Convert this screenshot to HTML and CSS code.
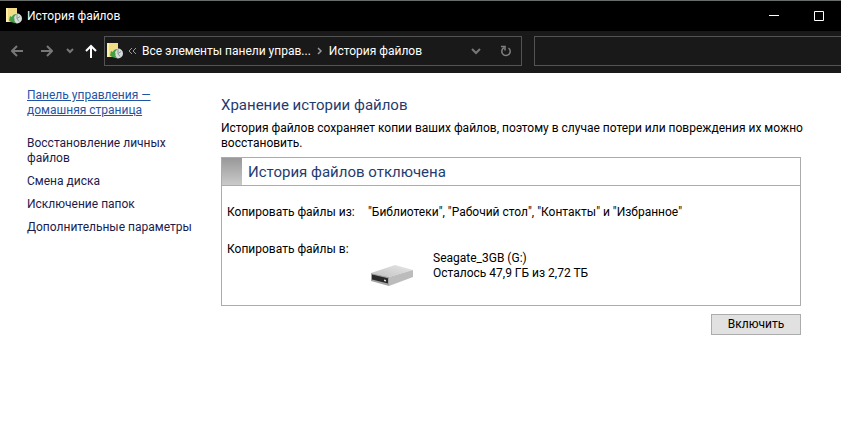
FILE: index.html
```
<!DOCTYPE html>
<html lang="ru">
<head>
    <meta charset="UTF-8">
    <meta name="viewport" content="width=device-width, initial-scale=1.0">
    <title>История файлов</title>
    <link rel="stylesheet" href="styles.css">
</head>
<body>
    <svg class="sprite" aria-hidden="true">
        <symbol id="history" viewBox="0 0 16 16">
            <path d="M0 0h11v14H0z" fill="#f3dc86"/>
            <path d="M0 0h2v14H0z" fill="#fff0a8"/>
            <circle cx="11" cy="10.500" r="5" fill="#d5dcda"/>
            <path d="M11 6.500v4l3-2M11 10.500l2 3M8 11h1" fill="none" stroke="#8d9894" stroke-width="1"/>
            <path d="M3 12.500 4 8l1.500 1C7 6.500 9 5.500 11.500 6 9 7 8 8.500 8 10.500s1 3 2 4.500c-3 0-6-1-7-2.500z" fill="#43a047"/>
        </symbol>
    </svg>

    <header class="titlebar">
        <svg class="app-icon"><use href="#history"/></svg>
        <span class="window-title">История файлов</span>
        <button class="window-button" type="button" aria-label="Свернуть">
            <svg width="10" height="10"><path d="M0 4.500h10" stroke="#fff"/></svg>
        </button>
        <button class="window-button" type="button" aria-label="Развернуть">
            <svg width="10" height="10"><path d="M.5.5h9v9h-9z" fill="none" stroke="#fff"/></svg>
        </button>
    </header>

    <nav class="toolbar">
        <button class="nav-button" type="button" aria-label="Назад">
            <svg width="12" height="12"><path d="M12 6H1M6 1 1 6l5 5" fill="none" stroke="#777" stroke-width="2"/></svg>
        </button>
        <button class="nav-button" type="button" aria-label="Вперед">
            <svg width="12" height="12"><path d="M0 6h11M6 1l5 5-5 5" fill="none" stroke="#777" stroke-width="2"/></svg>
        </button>
        <button class="nav-button recent" type="button" aria-label="Последние расположения">
            <svg width="8" height="8"><path d="M1 2l3 3 3-3" fill="none" stroke="#777" stroke-width="2"/></svg>
        </button>
        <button class="nav-button up" type="button" aria-label="Вверх">
            <svg width="12" height="14"><path d="M6 14V2M1 7l5-5 5 5" fill="none" stroke="#fff" stroke-width="2"/></svg>
        </button>
        <div class="address">
            <svg class="app-icon"><use href="#history"/></svg>
            <svg class="overflow" width="8" height="8"><path d="M4 1 1 4l3 3M8 1 5 4l3 3" fill="none" stroke="#999"/></svg>
            <a class="crumb" href="#">Все элементы панели управ...</a>
            <svg class="separator" width="6" height="8"><path d="M1 1l3 3-3 3" fill="none" stroke="#999" stroke-width="1.500"/></svg>
            <a class="crumb" href="#">История файлов</a>
            <button class="address-button drop" type="button" aria-label="Предыдущие расположения">
                <svg width="10" height="8"><path d="M1 2l4 4 4-4" fill="none" stroke="#777" stroke-width="2"/></svg>
            </button>
            <button class="address-button" type="button" aria-label="Обновить">
                <svg width="12" height="12"><path d="M8.500 3A4.200 4.200 0 1 1 4 2.700" fill="none" stroke="#808080" stroke-width="1.500"/><path d="M1 1.500h4V5.500" fill="none" stroke="#808080" stroke-width="1.500"/></svg>
            </button>
        </div>
        <input class="search" type="search" aria-label="Поиск">
    </nav>

    <div class="page">
        <aside class="sidebar">
            <a class="home" href="#">Панель управления — домашняя страница</a>
            <a href="#">Восстановление личных файлов</a>
            <a href="#">Смена диска</a>
            <a href="#">Исключение папок</a>
            <a href="#">Дополнительные параметры</a>
        </aside>

        <main class="content">
            <h1>Хранение истории файлов</h1>
            <p class="intro">История файлов сохраняет копии ваших файлов, поэтому в случае потери или повреждения их можно восстановить.</p>

            <section class="panel">
                <h2>История файлов отключена</h2>
                <dl class="details">
                    <dt>Копировать файлы из:</dt>
                    <dd>"Библиотеки", "Рабочий стол", "Контакты" и "Избранное"</dd>
                    <dt>Копировать файлы в:</dt>
                    <dd class="drive">
                        <svg class="drive-icon" width="48" height="28" viewBox="0 0 48 28">
                            <defs>
                                <linearGradient id="top" x1="0" y1="1" x2="1" y2="0">
                                    <stop offset="0" stop-color="#c2c2c2"/>
                                    <stop offset="1" stop-color="#e6e6e6"/>
                                </linearGradient>
                            </defs>
                            <path d="M3 12 27 4l18 5-24 7z" fill="url(#top)"/>
                            <path d="M21 16 45 9v7l-24 9z" fill="#bcbcbc"/>
                            <path d="M3 12l18 4v9L3 20z" fill="#a2a2a2"/>
                            <path d="M4 13.500l16 3.800v5.200L4 18.500z" fill="#292929"/>
                            <path d="M16 18.500l2 .5v1.500l-2-.5z" fill="#ddd"/>
                        </svg>
                        <div class="drive-info">
                            <div>Seagate_3GB (G:)</div>
                            <div>Осталось 47,9 ГБ из 2,72 ТБ</div>
                        </div>
                    </dd>
                </dl>
            </section>

            <button class="enable" type="button">Включить</button>
        </main>
    </div>
</body>
</html>
```
FILE: styles.css
```
* {
    box-sizing: border-box;
}

body {
    margin: 0;
    background: #fff;
    color: #000;
    font: 12px/15px Roboto, "Noto Sans", sans-serif;
}

button {
    margin: 0;
    padding: 0;
    border: 0;
    background: none;
    font: inherit;
}

svg {
    display: block;
    flex: none;
}

.sprite {
    display: none;
}

.app-icon {
    width: 16px;
    height: 16px;
}

.titlebar {
    display: flex;
    align-items: center;
    height: 31px;
    padding-left: 6px;
    border-top: 1px solid #686c6a;
    background: #000;
    color: #fff;
}

.window-title {
    flex: 1;
    margin-left: 5px;
}

.window-button {
    display: flex;
    align-items: center;
    justify-content: center;
    width: 45px;
    height: 30px;
}

.toolbar {
    display: flex;
    align-items: flex-start;
    height: 42px;
    padding: 5px 0 0 5px;
    background: #191919;
}

.nav-button {
    display: flex;
    flex: none;
    align-items: center;
    justify-content: center;
    width: 24px;
    height: 30px;
    margin-right: 6px;
}

.nav-button.recent {
    width: 10px;
    margin-right: 4px;
}

.nav-button.up {
    margin-right: 1px;
}

.address {
    display: flex;
    align-items: center;
    flex: 421 1 0;
    height: 30px;
    padding-left: 2px;
    border: 1px solid #535353;
    color: #fff;
}

.overflow {
    margin-left: 5px;
}

.crumb {
    margin-left: 6px;
    color: #fff;
    text-decoration: none;
    white-space: nowrap;
}

.separator {
    margin-left: 6px;
}

.address-button {
    display: flex;
    align-items: center;
    justify-content: center;
    width: 30px;
    height: 28px;
}

.address-button.drop {
    margin-left: auto;
}

.search {
    flex: 307 1 0;
    min-width: 0;
    height: 30px;
    margin-left: 12px;
    border: 1px solid #535353;
    border-right: 0;
    border-radius: 0;
    background: #191919;
    color: #fff;
    font: inherit;
}

.page {
    display: flex;
}

.sidebar {
    display: flex;
    flex: none;
    flex-direction: column;
    align-items: flex-start;
    gap: 8px;
    width: 221px;
    padding: 15px 24px 0 27px;
}

.sidebar a {
    color: #1c1c4c;
    text-decoration: none;
}

.sidebar .home {
    max-width: 140px;
    margin-bottom: 10px;
    color: #1f55a5;
    text-decoration: underline;
}

.content {
    flex: 1;
    padding: 22px 40px 0 0;
}

h1,
h2 {
    margin: 0;
    color: #1f3c70;
    font-size: 15px;
    font-weight: 400;
    line-height: 20px;
}

/* the intro may run a little past the panel's right edge */
.intro {
    margin: 6px -12px 6px 0;
}

.panel {
    border: 1px solid #acacac;
}

h2 {
    display: flex;
    align-items: center;
    height: 28px;
    border-bottom: 1px solid #acacac;
}

h2::before {
    content: "";
    width: 20px;
    height: 27px;
    margin-right: 6px;
    background: linear-gradient(#989898, #cacaca);
}

.details {
    display: grid;
    grid-template-columns: 141px 1fr;
    row-gap: 22px;
    margin: 0;
    padding: 19px 5px 16px;
}

.details dd {
    margin: 0;
}

.drive {
    display: flex;
    align-items: flex-start;
    gap: 17px;
    padding-top: 9px;
}

.drive-icon {
    margin-top: 10px;
}

.enable {
    display: block;
    width: 90px;
    height: 21px;
    margin: 8px 0 0 auto;
    border: 1px solid #acacac;
    background: #e1e1e1;
}
```
